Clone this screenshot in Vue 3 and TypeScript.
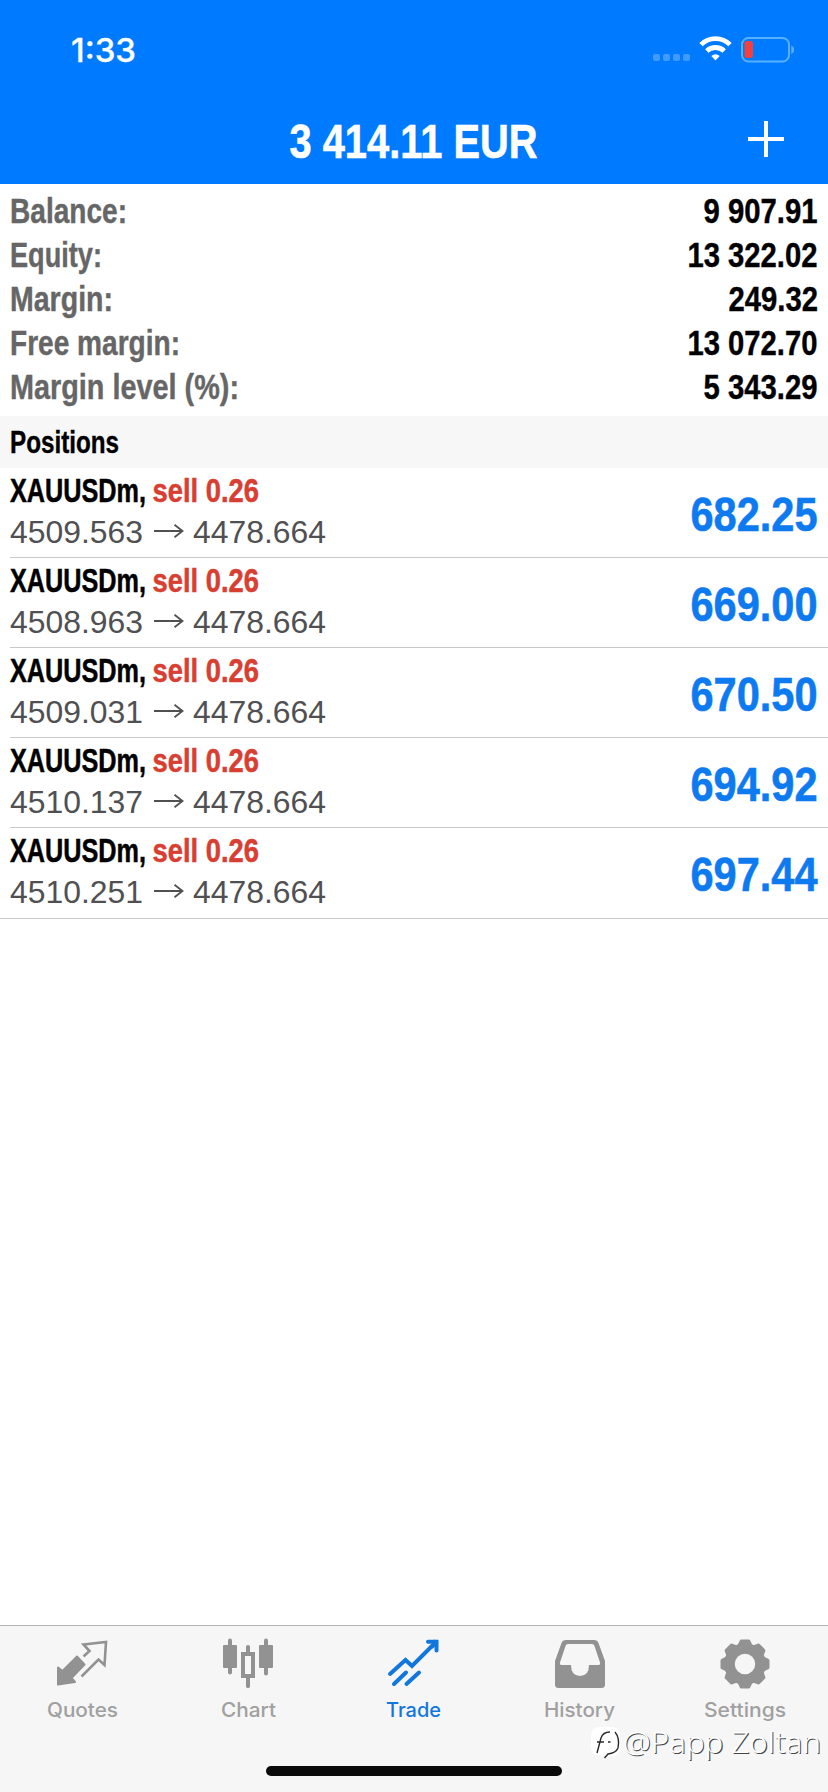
<script setup lang="ts">
interface Fitted { text: string; width: number }
interface SummaryRow { label: Fitted; value: Fitted }
interface Position { open: string; current: string; profit: string }

const summary: SummaryRow[] = [
  { label: { text: 'Balance:', width: 117 }, value: { text: '9 907.91', width: 114 } },
  { label: { text: 'Equity:', width: 92 }, value: { text: '13 322.02', width: 130 } },
  { label: { text: 'Margin:', width: 103 }, value: { text: '249.32', width: 89.5 } },
  { label: { text: 'Free margin:', width: 170 }, value: { text: '13 072.70', width: 130 } },
  { label: { text: 'Margin level (%):', width: 229 }, value: { text: '5 343.29', width: 114 } },
]

const positions: Position[] = [
  { open: '4509.563', current: '4478.664', profit: '682.25' },
  { open: '4508.963', current: '4478.664', profit: '669.00' },
  { open: '4509.031', current: '4478.664', profit: '670.50' },
  { open: '4510.137', current: '4478.664', profit: '694.92' },
  { open: '4510.251', current: '4478.664', profit: '697.44' },
]

const tabs = [
  { name: 'Quotes', width: 71 },
  { name: 'Chart', width: 55 },
  { name: 'Trade', width: 55 },
  { name: 'History', width: 71 },
  { name: 'Settings', width: 82 },
]

const gearTeeth = [0, 45, 90, 135, 180, 225, 270, 315]
</script>

<template>
  <div class="screen">
    <header class="header">
      <div class="status">
        <svg class="clock" width="72" height="40"><text x="0" y="32.5" textLength="65" lengthAdjust="spacingAndGlyphs">1:33</text></svg>
        <svg class="indicators" width="144" height="30" viewBox="0 0 144 30">
          <g fill="#3f9bff">
            <rect x="1" y="19" width="7" height="7" rx="2" /><rect x="11" y="19" width="7" height="7" rx="2" />
            <rect x="21" y="19" width="7" height="7" rx="2" /><rect x="31" y="19" width="7" height="7" rx="2" />
          </g>
          <g fill="none" stroke="#fff" stroke-width="4.8">
            <path d="M49 9.6A20.5 20.5 0 0 1 78 9.6" />
            <path d="M54.8 16A12.5 12.5 0 0 1 72.2 16" />
          </g>
          <path d="M59.3 21Q63.5 17.600 67.7 21L63.5 25.6Z" fill="#fff" />
          <rect x="90" y="3" width="47" height="23.5" rx="6.5" fill="none" stroke="#59b0ff" stroke-width="2" />
          <rect x="92.5" y="6" width="8.5" height="17" rx="2.5" fill="#f0403f" />
          <path d="M139.3 10.5Q142 11.5 142 14.8T139.3 19Z" fill="#59b0ff" />
        </svg>
      </div>
      <div class="titlebar">
        <svg class="title" width="252" height="60"><text x="1.5" y="46" textLength="248" lengthAdjust="spacingAndGlyphs">3 414.11 EUR</text></svg>
        <svg class="plus" width="36" height="36" viewBox="0 0 36 36"><path d="M18 0V36M0 18H36" stroke="#fff" stroke-width="4" /></svg>
      </div>
    </header>

    <section class="summary">
      <div v-for="row in summary" :key="row.label.text" class="summary-row">
        <svg class="label" :width="row.label.width + 2" height="44"><text x="0" y="33" :textLength="row.label.width" lengthAdjust="spacingAndGlyphs">{{ row.label.text }}</text></svg>
        <svg class="value" :width="row.value.width + 4" height="44"><text x="3.5" y="33" :textLength="row.value.width" lengthAdjust="spacingAndGlyphs">{{ row.value.text }}</text></svg>
      </div>
    </section>

    <h2 class="section-title">
      <svg width="120" height="52"><text x="0" y="37" textLength="109" lengthAdjust="spacingAndGlyphs">Positions</text></svg>
    </h2>

    <ul class="positions">
      <li v-for="p in positions" :key="p.open" class="position">
        <div class="details">
          <div class="symbol">
            <svg width="142" height="44"><text x="0" y="34" textLength="136" lengthAdjust="spacingAndGlyphs">XAUUSDm,</text></svg>
            <svg width="110" height="44"><text x="0.5" y="34" class="side" textLength="106.500" lengthAdjust="spacingAndGlyphs">sell 0.26</text></svg>
          </div>
          <div class="prices">
            <svg width="134" height="42"><text x="0" y="31" textLength="133" lengthAdjust="spacingAndGlyphs">{{ p.open }}</text></svg>
            <svg class="arrow" width="30" height="14" viewBox="0 0 30 14"><path d="M0 7H28.500M20.500 0.800L28.500 7L20.500 13.200" /></svg>
            <svg width="134" height="42"><text x="0" y="31" textLength="133" lengthAdjust="spacingAndGlyphs">{{ p.current }}</text></svg>
          </div>
        </div>
        <svg class="profit" width="128" height="60"><text x="0.5" y="46" textLength="127" lengthAdjust="spacingAndGlyphs">{{ p.profit }}</text></svg>
      </li>
    </ul>

    <footer class="footer">
      <nav class="tabs">
        <div v-for="tab in tabs" :key="tab.name" class="tab" :class="{ active: tab.name === 'Trade' }">
          <svg class="icon" width="52" height="52" viewBox="0 0 52 52">
            <g v-if="tab.name === 'Quotes'" transform="translate(-1 0)">
              <path fill="currentColor" stroke="currentColor" stroke-width="2" stroke-linejoin="round" d="M2 29.500L6.500 33L21 18.500L28.500 26.500L15.500 40L19 44L2 46.500Z" />
              <path fill="none" stroke="currentColor" stroke-width="2.600" d="M27.500 18.500L33.500 13L27.500 6.500L50 4L48.500 27L42.500 21.500L25.500 38.500" />
            </g>
            <g v-else-if="tab.name === 'Chart'" fill="currentColor">
              <rect x="6" y="0.5" width="4" height="36" rx="2" /><rect x="1" y="7" width="14" height="23" rx="1" />
              <rect x="42" y="0.5" width="4" height="37" rx="2" /><rect x="37" y="7" width="14" height="23" rx="1" />
              <path d="M24 15V8.500Q24 7 26 7T28 8.500V15ZM24 38V48.500Q24 50 26 50T28 48.500V38Z" />
              <rect x="21" y="16" width="10" height="22" fill="none" stroke="currentColor" stroke-width="4" />
            </g>
            <g v-else-if="tab.name === 'Trade'" transform="translate(-1 0)" fill="none" stroke="currentColor" stroke-width="4" stroke-linecap="round">
              <path d="M3 36L18.500 22L25 28L49 4" stroke-linejoin="miter" />
              <path d="M41 3.700H49.500V12.500" /><path d="M48 3L50 5L45 10Z" stroke-width="2" />
              <path d="M7 46L19 34.500M19.500 46L32 34.500" />
            </g>
            <g v-else-if="tab.name === 'History'">
              <path fill="currentColor" fill-rule="evenodd" d="M12 2H40Q43.500 2 44.500 5L51 23V46.500Q51 50 47.500 50H4.500Q1 50 1 46.500V23L7.500 5Q8.500 2 12 2ZM14 6Q12.300 6 11.700 7.600L6 24.500Q5.500 27 7.500 27H17Q17 38 26 38T35 27H44.500Q46.500 27 46 24.500L40.300 7.600Q39.700 6 38 6Z" />
            </g>
            <g v-else fill="none" stroke="currentColor">
              <circle cx="26" cy="26" r="15.500" stroke-width="10.500" />
              <path v-for="angle in gearTeeth" :key="angle" :transform="`rotate(${angle} 26 26)`" d="M19.500 9.500Q21.500 6 22.500 3.500H29.500Q30.500 6 32.500 9.500Z" fill="currentColor" stroke-width="4" stroke-linejoin="round" />
            </g>
          </svg>
          <svg class="tab-label" :width="tab.width" height="28"><text x="0" y="20.500" :textLength="tab.width" lengthAdjust="spacingAndGlyphs">{{ tab.name }}</text></svg>
        </div>
      </nav>
      <div class="home-indicator"></div>
      <svg class="watermark" width="240" height="50" viewBox="0 0 240 50">
        <rect x="3" y="7" width="29" height="29" rx="8" fill="#fff" />
        <path d="M9 33L13 18Q15 12 22 12M9 22H16M20 22H22.500M27 12Q32 18 30 28Q28 33 20 34L16.500 38" fill="none" stroke="#2a2a2a" stroke-width="1.400" />
        <text x="35" y="33" textLength="198" lengthAdjust="spacingAndGlyphs">@Papp Zoltan</text>
      </svg>
    </footer>
  </div>
</template>

<style>
body { margin: 0; background: #fff; }
</style>

<style scoped>
.screen { width: 828px; height: 1792px; display: flex; flex-direction: column; background: #fff; font-family: "Liberation Sans", Arial, sans-serif; overflow: hidden; }
svg { display: block; flex: none; overflow: visible; }
.header { height: 184px; box-sizing: border-box; background: #007aff; flex: none; }
.status { height: 100px; display: flex; justify-content: space-between; align-items: flex-start; padding: 29px 32px 0 71px; box-sizing: border-box; }
.clock text { font: 500 32.5px Inter, sans-serif; fill: #fff; stroke: #fff; stroke-width: 0.3px; }
.indicators { margin-top: 6px; }
.titlebar { display: grid; grid-template-columns: 1fr 252px 1fr; align-items: start; padding-top: 12px; }
.title { grid-column: 2; }
.title text { font-size: 48.5px; font-weight: 700; fill: #fff; stroke: #fff; stroke-width: 0.6px; }
.plus { justify-self: end; margin: 9px 44px 0 0; }
.summary { height: 232px; padding: 6px 10px 0; box-sizing: border-box; flex: none; }
.summary-row { height: 44px; display: flex; justify-content: space-between; }
.summary-row text { font-size: 35px; font-weight: 700; stroke-width: 0.4px; }
.label text { fill: #666; stroke: #666; }
.value text { fill: #000; stroke: #000; }
.section-title { height: 52px; margin: 0; padding-left: 10px; background: #f7f7f7; flex: none; }
.section-title text { font-size: 31px; font-weight: 700; stroke: #000; stroke-width: 0.4px; }
.positions { list-style: none; margin: 0; padding: 0; border-bottom: 1px solid #c8c8c8; }
.position { height: 90px; box-sizing: border-box; margin-left: 10px; padding-right: 10px; border-bottom: 1px solid #c8c8c8; display: flex; justify-content: space-between; }
.position:last-child { border-bottom: 0; }
.symbol { display: flex; }
.symbol text { font-size: 32.5px; font-weight: 700; fill: #000; stroke: #000; stroke-width: 0.5px; }
.symbol .side { fill: #d83f32; stroke: #d83f32; }
.prices { display: flex; }
.prices text { font-size: 32px; fill: #505052; }
.arrow { margin: 12px 9px 0 10px; }
.arrow path { fill: none; stroke: #505052; stroke-width: 1.8; }
.profit { margin-top: 17px; }
.profit text { font-size: 48.5px; font-weight: 700; fill: #0d7af0; stroke: #0d7af0; stroke-width: 0.6px; }
.footer { position: relative; margin-top: auto; height: 167px; box-sizing: border-box; border-top: 1px solid #b2b2b2; background: #f6f6f6; }
.tabs { display: grid; grid-template-columns: repeat(5, 1fr); padding-top: 12px; }
.tab { display: flex; flex-direction: column; align-items: center; color: #929292; }
.tab.active { color: #1177dc; }
.tab-label { margin-top: 6px; }
.tab-label text { font: 500 20px Inter, sans-serif; fill: currentColor; }
.tab:not(.active) .tab-label { color: #a0a0a0; }
.home-indicator { position: absolute; left: 266px; bottom: 16px; width: 296px; height: 10px; border-radius: 5px; background: #0a0a0a; }
.watermark { position: absolute; left: 588px; top: 94px; }
.watermark text { font: 300 29px "Noto Sans", sans-serif; fill: #fff; text-shadow: 1px 1px 0.5px #444; }
</style>
